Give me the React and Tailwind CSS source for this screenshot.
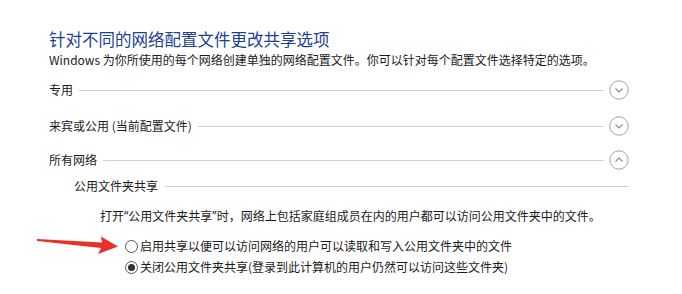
// App.jsx
import React from "react";

const FONT = { fontFamily: '"Microsoft YaHei", "Noto Sans CJK SC", "Noto Sans", sans-serif' };

// round expander button on the right of a profile row
const Expander = ({ open }) => (
  <svg width="20" height="20" viewBox="0 0 20 20" className="shrink-0">
    <circle cx="10" cy="10" r="9.2" fill="white" stroke="#a3a3a3" strokeWidth="1" />
    {open ? (
      <path d="M6.5 11.5 L10 8 L13.5 11.5" fill="none" stroke="#8a8a8a" strokeWidth="1.1" />
    ) : (
      <path d="M6.5 8.5 L10 12 L13.5 8.5" fill="none" stroke="#8a8a8a" strokeWidth="1.1" />
    )}
  </svg>
);

const ProfileRow = ({ label, open, className }) => (
  <div className={`flex items-center h-[24px] ${className}`}>
    <span className="text-[12px] text-[#1a1a1a] whitespace-nowrap">{label}</span>
    <div className="flex-1 h-px bg-[#cfcfcf] ml-[6px] mr-[5px]" />
    <Expander open={open} />
  </div>
);

const Radio = ({ checked, label, className }) => (
  <div className={`flex items-center h-[20px] pl-[125px] ${className}`}>
    <span className="w-[13px] h-[13px] rounded-full border border-[#555] bg-white flex items-center justify-center shrink-0">
      {checked && <span className="w-[7px] h-[7px] rounded-full bg-[#333]" />}
    </span>
    <span className="ml-[2px] text-[12px] text-[#1a1a1a] whitespace-nowrap">{label}</span>
  </div>
);

// narrow latin curly quotes, as the reference font draws them
const Q = ({ children }) => <span className="font-['Noto_Sans']">{children}</span>;

function App() {
  return (
    <div className="relative w-[682px] h-[294px] bg-white overflow-hidden" style={FONT}>
      <div className="pt-[29px] pl-[49px] pr-[53px]">
        <div className="h-[20px] flex items-center text-[16.5px] leading-[20px] text-[#1d3f94] whitespace-nowrap">
          针对不同的网络配置文件更改共享选项
        </div>
        <div className="h-[16px] mt-[3px] flex items-center text-[12px] leading-[16px] text-[#1a1a1a] whitespace-nowrap">
          Windows 为你所使用的每个网络创建单独的网络配置文件。你可以针对每个配置文件选择特定的选项。
        </div>

        <ProfileRow label="专用" className="mt-[10px]" />
        <ProfileRow label="来宾或公用 (当前配置文件)" className="mt-[12px]" />
        <ProfileRow label="所有网络" open className="mt-[10px]" />

        {/* expanded section */}
        <div className="flex items-center h-[20px] mt-[4px] pl-[25px]">
          <span className="text-[12px] text-[#1a1a1a] whitespace-nowrap">公用文件夹共享</span>
          <div className="flex-1 h-px bg-[#cfcfcf] ml-[7px]" />
        </div>
        <div className="h-[20px] flex items-center mt-[10px] pl-[51px] text-[12px] text-[#1a1a1a] whitespace-nowrap">
          打开<Q>“</Q>公用文件夹共享<Q>”</Q>时，网络上包括家庭组成员在内的用户都可以访问公用文件夹中的文件。
        </div>
      </div>

      <Radio label="启用共享以便可以访问网络的用户可以读取和写入公用文件夹中的文件" className="mt-[10px]" />
      <Radio checked label="关闭公用文件夹共享(登录到此计算机的用户仍然可以访问这些文件夹)" className="mt-[1px]" />

      {/* red annotation arrow */}
      <svg className="absolute left-0 top-0" width="682" height="294">
        <polygon
          points="37,239 102,242.5 101,236.5 118,246.5 98,254 101,248 37,241"
          fill="#e8312a"
        />
      </svg>
    </div>
  );
}

export default App;
